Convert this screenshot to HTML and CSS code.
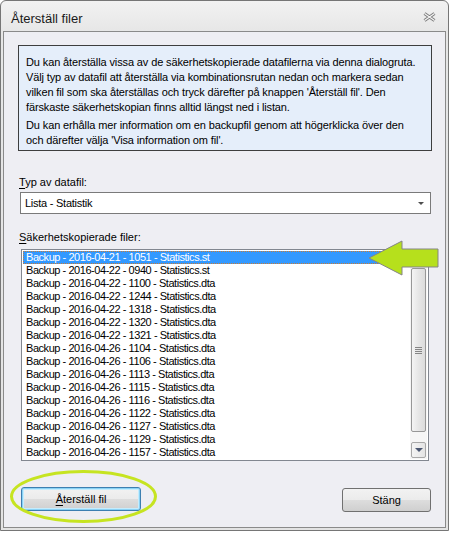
FILE: index.html
```html
<!DOCTYPE html>
<html lang="sv">
<head>
<meta charset="utf-8">
<title>Återställ filer</title>
<link rel="stylesheet" href="styles.css">
</head>
<body>
<div class="window">
  <div class="titlebar">
    <span class="title">Återställ filer</span>
    <svg class="close" width="13" height="10" viewBox="0 0 13 10">
      <path d="M1.5 1.5 L11.5 8.5 M11.5 1.5 L1.5 8.5" stroke="#7d7d7d" stroke-width="3.2" fill="none"/>
      <path d="M1.5 1.5 L11.5 8.5 M11.5 1.5 L1.5 8.5" stroke="#f6f6f6" stroke-width="1.2" fill="none"/>
    </svg>
  </div>
  <div class="client">
    <div class="info">
      <p>Du kan återställa vissa av de säkerhetskopierade datafilerna via denna dialogruta.<br>Välj typ av datafil att återställa via kombinationsrutan nedan och markera sedan<br>vilken fil som ska återställas och tryck därefter på knappen 'Återställ fil'. Den<br>färskaste säkerhetskopian finns alltid längst ned i listan.</p>
      <p>Du kan erhålla mer information om en backupfil genom att högerklicka över den<br>och därefter välja 'Visa information om fil'.</p>
    </div>
    <div class="label label-type"><u>T</u>yp av datafil:</div>
    <div class="combo">
      <span class="combo-text">Lista - Statistik</span>
      <span class="combo-arrow"></span>
    </div>
    <div class="label label-files"><u>S</u>äkerhetskopierade filer:</div>
    <div class="listbox">
      <div class="rows">
        <div class="row selected">Backup - 2016-04-21 - 1051 - Statistics.st</div>
        <div class="row">Backup - 2016-04-22 - 0940 - Statistics.st</div>
        <div class="row">Backup - 2016-04-22 - 1100 - Statistics.dta</div>
        <div class="row">Backup - 2016-04-22 - 1244 - Statistics.dta</div>
        <div class="row">Backup - 2016-04-22 - 1318 - Statistics.dta</div>
        <div class="row">Backup - 2016-04-22 - 1320 - Statistics.dta</div>
        <div class="row">Backup - 2016-04-22 - 1321 - Statistics.dta</div>
        <div class="row">Backup - 2016-04-26 - 1104 - Statistics.dta</div>
        <div class="row">Backup - 2016-04-26 - 1106 - Statistics.dta</div>
        <div class="row">Backup - 2016-04-26 - 1113 - Statistics.dta</div>
        <div class="row">Backup - 2016-04-26 - 1115 - Statistics.dta</div>
        <div class="row">Backup - 2016-04-26 - 1116 - Statistics.dta</div>
        <div class="row">Backup - 2016-04-26 - 1122 - Statistics.dta</div>
        <div class="row">Backup - 2016-04-26 - 1127 - Statistics.dta</div>
        <div class="row">Backup - 2016-04-26 - 1129 - Statistics.dta</div>
        <div class="row">Backup - 2016-04-26 - 1157 - Statistics.dta</div>
      </div>
      <div class="scrollbar">
        <div class="sb-up"></div>
        <div class="sb-thumb"><span class="grip"></span></div>
        <div class="sb-track"></div>
        <div class="sb-down"><span class="down-tri"></span></div>
      </div>
    </div>
    <div class="buttons">
      <button class="btn btn-restore"><u>Å</u>terställ fil</button>
      <button class="btn btn-close">Stäng</button>
    </div>
  </div>

  <svg class="annot-arrow" width="74" height="38" viewBox="0 0 74 38">
    <polygon points="2,19 35,2 35,10 71,10 71,28 35,28 35,36" fill="#b6e01c" stroke="#858585" stroke-width="1"/>
  </svg>
  <svg class="annot-ellipse" width="152" height="57" viewBox="0 0 152 57">
    <ellipse cx="75.5" cy="28.5" rx="72" ry="25" fill="none" stroke="#c6e421" stroke-width="3"/>
  </svg>
</div>
</body>
</html>
```

FILE: styles.css
```css
html, body {
  margin: 0;
  padding: 0;
  background: #ffffff;
}

body {
  font-family: "Liberation Sans", "DejaVu Sans", sans-serif;
  font-size: 11px;
  color: #000;
}

.window {
  position: relative;
  width: 449px;
  height: 531px;
  box-sizing: border-box;
  border: 1px solid #767676;
  border-radius: 6px 6px 0 0;
  background: linear-gradient(#f2f2f2, #e6e6e6 32px, #e3e3e3);
  padding: 0 2px 2px 2px;
  display: flex;
  flex-direction: column;
}

.titlebar {
  height: 30px;
  display: flex;
  align-items: center;
  justify-content: space-between;
  padding: 0 10px 0 8px;
  flex: none;
}

.title {
  font-size: 13px;
  color: #1a1a1a;
  margin-top: 5px;
}

.close {
  margin-top: 2px;
}

.client {
  flex: 1;
  border: 1px solid #8a8a8a;
  background: #eeeef3;
  display: flex;
  flex-direction: column;
  align-items: flex-start;
}

.info {
  margin: 13px 0 0 14px;
  width: 414px;
  height: 106px;
  box-sizing: border-box;
  border: 1px solid #3e3e3e;
  background: #e5eefa;
  padding: 9px 6px 0 7px;
  white-space: nowrap;
  letter-spacing: -0.12px;
}

.info p {
  margin: 0;
  line-height: 15px;
}

.info p + p {
  margin-top: 3px;
}

.label {
  line-height: 14px;
  margin-left: 15px;
}

.label u {
  text-decoration-thickness: 1px;
  text-underline-offset: 2px;
}

.label-type {
  margin-top: 24px;
}

.combo {
  margin: 3px 0 0 16px;
  width: 411px;
  height: 22px;
  box-sizing: border-box;
  border: 1px solid #7a7a7a;
  background: #fff;
  display: flex;
  align-items: center;
  justify-content: space-between;
  padding: 0 6px 0 4px;
}

.combo-text {
  letter-spacing: -0.25px;
}

.combo-arrow {
  width: 0;
  height: 0;
  border-left: 3px solid transparent;
  border-right: 3px solid transparent;
  border-top: 3px solid #4e4e4e;
  margin-top: 1px;
}

.label-files {
  margin-top: 16px;
}

.listbox {
  margin: 5px 0 0 17px;
  width: 408px;
  height: 212px;
  box-sizing: border-box;
  border: 1px solid #828790;
  background: #fff;
  padding: 1px;
  display: flex;
}

.rows {
  flex: 1;
}

.row {
  height: 13px;
  line-height: 13px;
  padding-left: 3px;
  white-space: nowrap;
  letter-spacing: -0.45px;
}

.row.selected {
  background: #3399ff;
  color: #fff;
  outline: 1px dotted #c97c36;
  outline-offset: -1px;
}

.scrollbar {
  width: 17px;
  background: #f6f6f6;
  display: flex;
  flex-direction: column;
  align-items: center;
}

.sb-up {
  height: 17px;
  flex: none;
}

.sb-thumb {
  width: 15px;
  height: 164px;
  box-sizing: border-box;
  border: 1px solid #979797;
  border-radius: 2px;
  background: linear-gradient(to right, #f4f4f4, #e6e6e6 50%, #dcdcdc);
  display: flex;
  align-items: center;
  justify-content: center;
  flex: none;
}

.grip {
  width: 7px;
  height: 7px;
  background: repeating-linear-gradient(#858585 0 1px, transparent 1px 2px);
}

.sb-track {
  flex: 1;
}

.sb-down {
  width: 15px;
  height: 16px;
  box-sizing: border-box;
  border: 1px solid #a8a8a8;
  border-radius: 2px;
  background: linear-gradient(to right, #f4f4f4, #e4e4e4);
  display: flex;
  align-items: center;
  justify-content: center;
  margin-bottom: 1px;
  flex: none;
}

.down-tri {
  width: 0;
  height: 0;
  border-left: 4px solid transparent;
  border-right: 4px solid transparent;
  border-top: 4px solid #4a5670;
}

.buttons {
  margin: 26px 0 0 17px;
  width: 410px;
  display: flex;
  justify-content: space-between;
}

.btn {
  font-family: "Liberation Sans", "DejaVu Sans", sans-serif;
  font-size: 11px;
  color: #000;
  height: 24px;
  box-sizing: border-box;
  border: 1px solid #707070;
  border-radius: 3px;
  background: linear-gradient(#f2f2f2, #ebebeb 50%, #dddddd 51%, #cfcfcf);
  padding: 0;
}

.btn u {
  text-underline-offset: 2px;
}

.btn-restore {
  width: 120px;
  border-color: #3c7fb1;
  box-shadow: inset 0 0 0 1px #8ad2f5, inset 0 0 0 2px #c5ecfd;
}

.btn-close {
  width: 89px;
  margin-top: 1px;
}

.annot-arrow {
  position: absolute;
  left: 366px;
  top: 238px;
}

.annot-ellipse {
  position: absolute;
  left: 7px;
  top: 467px;
}
```
